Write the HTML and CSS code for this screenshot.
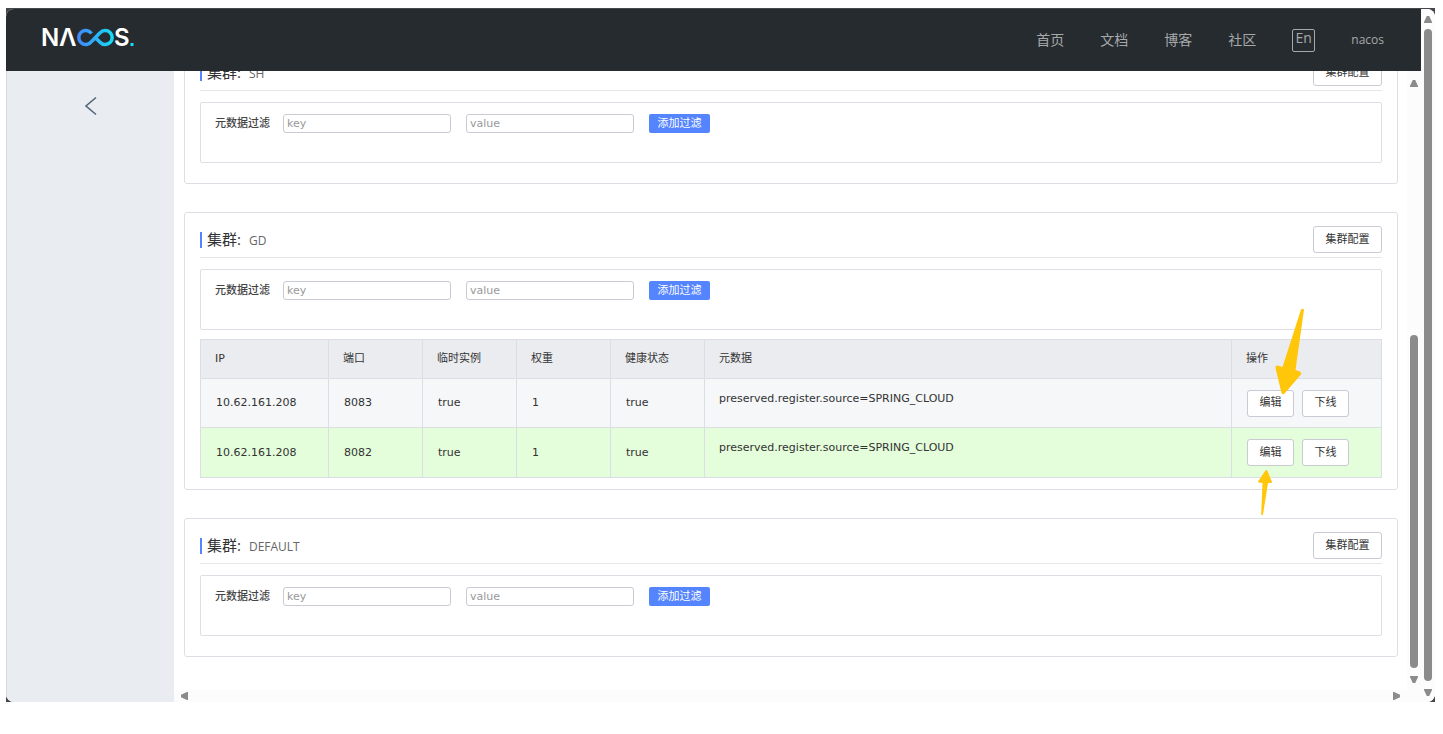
FILE: index.html
```html
<!DOCTYPE html>
<html lang="zh-CN">
<head>
<meta charset="utf-8">
<title>Nacos</title>
<link rel="stylesheet" href="styles.css">
</head>
<body>
<div class="desktop">
<div class="window">
  <div class="page">
    <header class="topbar">
      <a class="logo" href="#" aria-label="Nacos">
        <svg width="98" height="30" viewBox="-3 -4 98 30">
          <defs>
            <linearGradient id="loop" x1="34" x2="72" y1="0" y2="0" gradientUnits="userSpaceOnUse">
              <stop offset="0" stop-color="#4585fb"/>
              <stop offset="1" stop-color="#12e0f5"/>
            </linearGradient>
          </defs>
          <text class="logo-text" x="-2 16 71" y="19">NΛS</text>
          <path d="M48.500 6.500A7 7 0 1 0 48.500 14.500L57 5.800A7 7 0 1 1 57 15.200L53 11.200" fill="none" stroke="url(#loop)" stroke-width="3.500"/>
          <rect x="87.500" y="16" width="3" height="3" fill="#12e0f5"/>
        </svg>
      </a>
      <nav class="nav">
        <a href="#">首页</a>
        <a href="#">文档</a>
        <a href="#">博客</a>
        <a href="#">社区</a>
        <button class="lang" type="button">En</button>
        <a class="user" href="#">nacos</a>
      </nav>
    </header>
    <div class="body">
      <aside class="sidebar">
        <button class="back" type="button" aria-label="返回">
          <svg width="14" height="20" viewBox="0 0 14 20"><path d="M12 1.500L2 10L12 18.500" fill="none" stroke="#546478" stroke-width="1.600"/></svg>
        </button>
      </aside>
      <div class="pane">
        <div class="pane-row">
          <main class="content">
            <section class="card">
              <div class="card-head">
                <h2 class="title">集群:<span class="name">SH</span></h2>
                <button class="btn" type="button">集群配置</button>
              </div>
              <form class="filter">
                <label class="filter-label" for="k1">元数据过滤</label>
                <input class="field" id="k1" type="text" placeholder="key">
                <input class="field" type="text" placeholder="value" aria-label="value">
                <button class="add" type="button">添加过滤</button>
              </form>
            </section>
            <section class="card">
              <div class="card-head">
                <h2 class="title">集群:<span class="name">GD</span></h2>
                <button class="btn" type="button">集群配置</button>
              </div>
              <form class="filter">
                <label class="filter-label" for="k2">元数据过滤</label>
                <input class="field" id="k2" type="text" placeholder="key">
                <input class="field" type="text" placeholder="value" aria-label="value">
                <button class="add" type="button">添加过滤</button>
              </form>
              <div class="table-wrap">
                <table class="table">
                  <colgroup><col class="c-ip"><col class="c-sm"><col class="c-sm"><col class="c-sm"><col class="c-sm"><col><col class="c-ops"></colgroup>
                  <thead>
                    <tr><th>IP</th><th>端口</th><th>临时实例</th><th>权重</th><th>健康状态</th><th>元数据</th><th>操作</th></tr>
                  </thead>
                  <tbody>
                    <tr>
                      <td>10.62.161.208</td><td>8083</td><td>true</td><td>1</td><td>true</td>
                      <td class="meta">preserved.register.source=SPRING_CLOUD</td>
                      <td><div class="ops"><button class="btn" type="button">编辑</button><button class="btn" type="button">下线</button></div></td>
                    </tr>
                    <tr class="healthy">
                      <td>10.62.161.208</td><td>8082</td><td>true</td><td>1</td><td>true</td>
                      <td class="meta">preserved.register.source=SPRING_CLOUD</td>
                      <td><div class="ops"><button class="btn" type="button">编辑</button><button class="btn" type="button">下线</button></div></td>
                    </tr>
                  </tbody>
                </table>
                <svg class="arrow arrow-down" width="30" height="88" viewBox="0 0 30 88"><path d="M26 1.500Q27.500 0 29 1.500L20.500 62L25 63.500Q27 65 25.500 67L10 85Q8 87.500 6.500 85L.500 60Q0 57 2.500 57.500L7.500 59Z" fill="#ffc60a"/></svg>
                <svg class="arrow arrow-up" width="14" height="46" viewBox="0 0 14 46"><path d="M7.500 .500Q8.500 -.500 9.500 1L14 12L13.500 13L10 13L5 44.500Q4 46 3.200 44.500L4.500 13L.500 12.500L0 11.500Z" fill="#ffc60a"/></svg>
              </div>
            </section>
            <section class="card">
              <div class="card-head">
                <h2 class="title">集群:<span class="name">DEFAULT</span></h2>
                <button class="btn" type="button">集群配置</button>
              </div>
              <form class="filter">
                <label class="filter-label" for="k3">元数据过滤</label>
                <input class="field" id="k3" type="text" placeholder="key">
                <input class="field" type="text" placeholder="value" aria-label="value">
                <button class="add" type="button">添加过滤</button>
              </form>
            </section>
          </main>
          <div class="vbar inner">
            <span class="tri up"></span>
            <div class="track"><div class="thumb low"></div></div>
            <span class="tri down"></span>
          </div>
        </div>
        <div class="hbar"><span class="tri left"></span><span class="tri right"></span></div>
      </div>
    </div>
  </div>
  <div class="vbar outer">
    <span class="tri up"></span>
    <div class="track"><div class="thumb"></div></div>
    <span class="tri down"></span>
  </div>
</div>
</div>
</body>
</html>
```
FILE: styles.css
```css
* { box-sizing: border-box; }
body {
  margin: 0;
  height: 100vh;
  padding: 8px 8px 32px 6px;
  background: #fff;
  color: #333;
  font: 11px/16px "DejaVu Sans", "Noto Sans CJK SC", sans-serif;
}
button, input { font: inherit; margin: 0; }
a { color: inherit; text-decoration: none; }

.desktop { height: 100%; background: #45474c; padding-top: 1px; }
.window {
  display: flex;
  height: 100%;
  background: #fff;
  border-radius: 8px;
  overflow: hidden;
}
.page { flex: 1; min-width: 0; display: flex; flex-direction: column; }

.topbar {
  flex: none;
  height: 62px;
  display: flex;
  align-items: center;
  justify-content: space-between;
  padding: 0 37px 0 34px;
  background: #262b2f;
}
.logo { display: flex; padding-bottom: 4px; }
.logo-text { font: 600 24px Inter, sans-serif; fill: #fff; }
.nav {
  display: flex;
  align-items: center;
  gap: 36px;
  color: #a6a9ab;
  font: 14px/20px "Open Sans", "Noto Sans CJK SC", sans-serif;
}
.lang {
  width: 23px;
  height: 23px;
  padding: 0 0 4px;
  border: 1px solid #a6a9ab;
  border-radius: 2px;
  background: none;
  color: inherit;
  line-height: 16px;
}
.user { font-size: 12px; }

.body { flex: 1; min-height: 0; display: flex; }
.sidebar {
  flex: none;
  width: 168px;
  padding-top: 25px;
  background: #e9edf2;
  border-left: 1px solid #d4d8dd;
  text-align: center;
}
.back { border: 0; background: none; padding: 0; }
.pane { flex: 1; min-width: 0; display: flex; flex-direction: column; }
.pane-row { flex: 1; min-height: 0; display: flex; }
.content {
  flex: 1;
  min-width: 0;
  display: flex;
  flex-direction: column;
  justify-content: flex-end;
  gap: 28px;
  padding: 0 9px 33px 10px;
  overflow: hidden;
}

.card {
  flex: none;
  padding: 13px 15px 11px;
  border: 1px solid #dedfe5;
  border-radius: 3px;
}
.card-head {
  display: flex;
  justify-content: space-between;
  align-items: center;
  padding-bottom: 4px;
  margin-bottom: 11px;
  border-bottom: 1px solid #e6e7eb;
}
.title {
  display: flex;
  align-items: baseline;
  gap: 8px;
  margin: 0;
  padding-left: 5px;
  border-left: 2px solid #5584ff;
  font: 15px/15px "Open Sans", "Noto Sans CJK SC", sans-serif;
}
.name { font-size: 12px; color: #666; }
.btn {
  width: 69px;
  height: 27px;
  padding: 0;
  border: 1px solid #c8cad4;
  border-radius: 3px;
  background: #fff;
  color: #333;
}

.filter {
  display: flex;
  align-items: flex-start;
  gap: 15px;
  height: 61px;
  margin-bottom: 9px;
  padding: 11px 14px;
  border: 1px solid #dedfe5;
  border-radius: 2px;
}
.filter-label { margin-right: -2px; line-height: 19px; font-weight: 500; color: #444; }
.field {
  width: 168px;
  height: 19px;
  padding: 0 3px;
  border: 1px solid #c8cad4;
  border-radius: 3px;
  background: #fff;
}
.field::placeholder { color: #999; opacity: 1; }
.add {
  width: 61px;
  height: 19px;
  padding: 0;
  border: 0;
  border-radius: 2px;
  background: #5584ff;
  color: #fff;
}

.table-wrap { position: relative; }
.table { width: 100%; table-layout: fixed; border-collapse: collapse; }
.c-ip { width: 128px; }
.c-sm { width: 94px; }
.c-ops { width: 150px; }
.table th, .table td {
  padding: 0 14px;
  border: 1px solid #dcdee5;
  text-align: left;
  font-weight: 400;
}
.table th { height: 39px; background: #ebecf0; }
.table td { height: 49px; padding-left: 15px; background: #f5f7f9; }
.table .healthy td { height: 50px; background: #e4fdda; }
.table .meta { padding-bottom: 9px; padding-left: 14px; }
.ops { display: flex; gap: 8px; }
.ops .btn { width: 47px; }
.arrow { position: absolute; }
.arrow-down { right: 77px; top: -31px; }
.arrow-up { right: 110px; top: 131px; }

.vbar {
  flex: none;
  display: flex;
  flex-direction: column;
  align-items: center;
  gap: 6px;
  width: 14px;
  background: #fcfcfc;
}
.outer { padding: 7px 0 6px; }
.inner { padding: 9px 0 7px; }
.track {
  flex: 1;
  display: flex;
  flex-direction: column;
  justify-content: flex-end;
  padding-bottom: 2px;
}
.thumb { width: 8px; height: 100%; border-radius: 4px; background: #8b8b8b; }
.low { height: 58%; }
.hbar {
  flex: none;
  display: flex;
  align-items: center;
  justify-content: space-between;
  height: 12px;
  padding: 0 21px 0 7px;
  background: #fcfcfc;
}
.tri { width: 8px; height: 7px; background: #8b8b8b; }
.up { clip-path: polygon(35% 0, 65% 0, 100% 85%, 100% 100%, 0 100%, 0 85%); }
.down { clip-path: polygon(0 0, 100% 0, 100% 15%, 65% 100%, 35% 100%, 0 15%); }
.left { width: 7px; height: 8px; clip-path: polygon(100% 0, 100% 100%, 85% 100%, 0 65%, 0 35%, 85% 0); }
.right { width: 7px; height: 8px; clip-path: polygon(0 0, 15% 0, 100% 35%, 100% 65%, 15% 100%, 0 100%); }
```
